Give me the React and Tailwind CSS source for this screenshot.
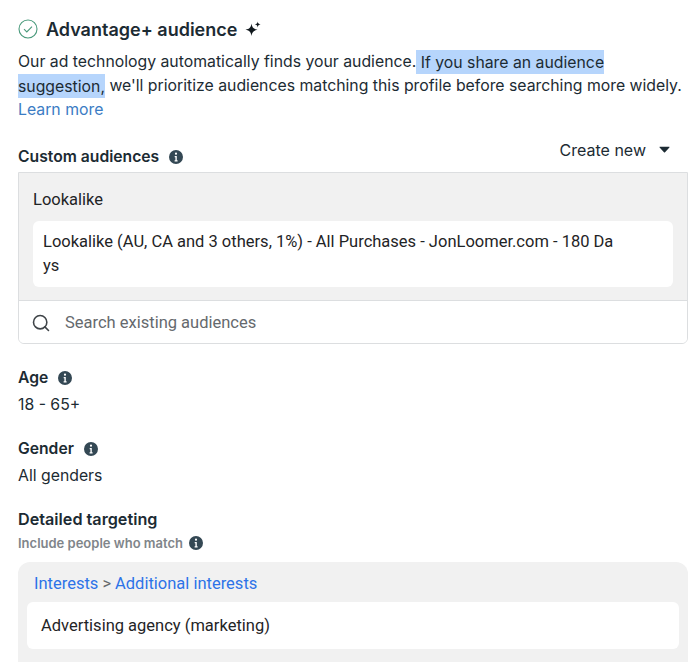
import { Search } from "lucide-react";

const body = { fontFamily: '"Inter", "Liberation Sans", sans-serif' };
const roboto = { fontFamily: 'Roboto, "Liberation Sans", sans-serif' };

function InfoIcon({ className }) {
  return (
    <svg viewBox="0 0 16 16" className={className} fill="currentColor">
      <path
        fillRule="evenodd"
        d="M8 1a7 7 0 1 1 0 14A7 7 0 0 1 8 1Zm0 2.6a1.1 1.1 0 1 0 0 2.2 1.1 1.1 0 0 0 0-2.2ZM6.7 7v1.2h.7v3H6.6v1.2h3v-1.2h-.8V7H6.7Z"
      />
    </svg>
  );
}

function Label({ children }) {
  return (
    <div className="flex items-center gap-[9px] text-[15.7px] leading-5 font-semibold text-[#1c2b33]">
      {children}
      <InfoIcon className="h-4 w-4 text-[#344854]" />
    </div>
  );
}

export default function App() {
  return (
    <div style={body} className="h-[662px] w-[700px] overflow-hidden bg-white pl-[18px] pr-3 text-[#1c2b33]">
      <div className="flex h-[50px] items-center pt-2">
        <svg viewBox="0 0 20 20" className="h-5 w-5 text-[#4a9a7c]" fill="none" stroke="currentColor">
          <circle cx="10" cy="10" r="9" strokeWidth="1.1" />
          <path d="M6 10.2l2.8 2.8L14 7.6" strokeWidth="1.1" />
        </svg>
        <span className="ml-2 text-[18px] font-semibold">Advantage+ audience</span>
        <svg viewBox="0 0 16 16" className="mb-[1px] ml-2 h-4 w-4 text-[#10181d]" fill="currentColor">
          <path d="M6.5 2.6c.6 4 1.9 5.4 6 6.2-4.100.8-5.400 2.200-6 6.200-.6-4-1.900-5.400-6-6.200 4.100-.8 5.400-2.200 6-6.200Z" />
          <path d="M12.700.6c.3 1.900.9 2.600 2.900 2.900-2 .3-2.600 1-2.900 2.900-.3-1.900-.9-2.600-2.900-2.900 2-.3 2.600-1 2.900-2.900Z" />
        </svg>
      </div>

      <p className="text-[15.8px] leading-6 whitespace-nowrap">
        Our ad technology automatically finds your audience.<span className="bg-[#b6d5fc] py-[2.5px]"> If you share an audience </span>
        <br />
        <span className="bg-[#b6d5fc] py-[2.5px]">suggestion,</span> we'll prioritize audiences matching this profile before searching more widely.
        <br />
        <span className="text-[#3b7cc4]">Learn more</span>
      </p>

      <div className="mt-[19px] flex h-[27px] items-center justify-between pr-[18px]">
        <div className="pt-[5px]">
          <Label>Custom audiences</Label>
        </div>
        <div className="flex items-center gap-[13px] pb-[10px] text-[16px]">
          Create new
          <svg viewBox="0 0 12 8" className="h-[7px] w-[11px] text-[#1c2b33]" fill="currentColor">
            <path d="M.8.8h10.4c.5 0 .7.5.4.9L6.6 7a.8.8 0 0 1-1.2 0L.4 1.7C.1 1.3.3.8.8.8Z" />
          </svg>
        </div>
      </div>

      <div className="mt-1 w-[670px] overflow-hidden rounded-b-md border border-[#dcdee0]">
        <div style={roboto} className="h-[128px] border-b border-[#dcdee0] bg-[#f1f1f1] px-[14px] text-[16.5px] text-[#1f2426]">
          <div className="flex h-[48px] items-center pt-[6px]">Lookalike</div>
          <div className="h-[66px] w-[640px] rounded-md bg-white px-[10px] py-[9px] leading-6 whitespace-nowrap">
            Lookalike (AU, CA and 3 others, 1%) - All Purchases - JonLoomer.com - 180 Da
            <br />
            ys
          </div>
        </div>
        <div style={roboto} className="flex h-[42px] items-center gap-[14px] bg-white pt-[2px] pl-3 text-[16.5px] text-[#65696d]">
          <Search size={20} strokeWidth={1.9} className="text-[#3f4448]" />
          Search existing audiences
        </div>
      </div>

      <div className="mt-6">
        <Label>Age</Label>
        <div className="mt-[7px] text-[15.8px] leading-5">18 - 65+</div>
      </div>
      <div className="mt-6">
        <Label>Gender</Label>
        <div className="mt-[7px] text-[15.8px] leading-5">All genders</div>
      </div>

      <div className="mt-[23px] text-[16.2px] leading-5 font-semibold">Detailed targeting</div>
      <div className="mt-1 flex items-center gap-[5px] text-[13px] leading-5 font-semibold text-[#80858a]">
        Include people who match
        <InfoIcon className="h-4 w-4 text-[#344854]" />
      </div>

      <div style={roboto} className="mt-[9px] h-[140px] w-[670px] rounded-t-xl bg-[#f1f1f1] px-[9px] text-[16.5px] text-[#1f2426]">
        <div className="flex h-[40px] items-center pt-1 pl-[7px]">
          <span className="text-[#2d73e8]">Interests</span>
          <span className="mx-1 text-[#65696d]">&gt;</span>
          <span className="text-[#2d73e8]">Additional interests</span>
        </div>
        <div className="flex h-[47px] w-[652px] items-center rounded-md bg-white px-[14px] pt-[2px]">
          Advertising agency (marketing)
        </div>
      </div>
    </div>
  );
}
